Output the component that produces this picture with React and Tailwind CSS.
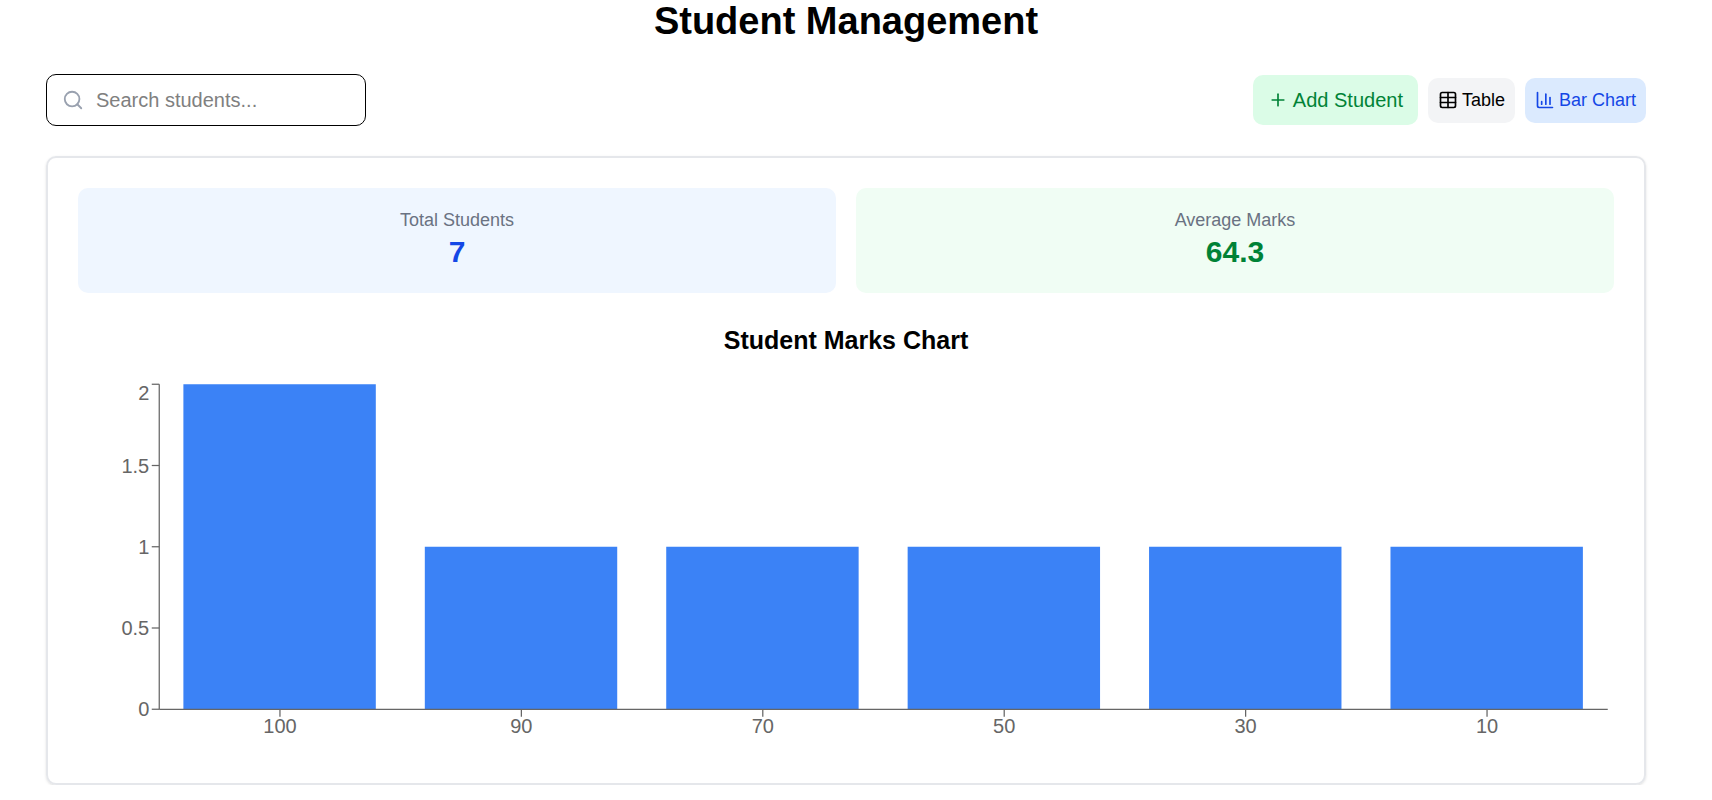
import { useLayoutEffect, useRef, useState } from "react";
import { ChartColumn, Plus, Search, Table } from "lucide-react";

const DATA = [
  { marks: 100, count: 2 },
  { marks: 90, count: 1 },
  { marks: 70, count: 1 },
  { marks: 50, count: 1 },
  { marks: 30, count: 1 },
  { marks: 10, count: 1 },
];
const Y_TICKS = [0, 0.5, 1, 1.5, 2];

function MarksChart() {
  const ref = useRef(null);
  const [width, setWidth] = useState(1536);

  useLayoutEffect(() => {
    const el = ref.current;
    const update = () => setWidth(el.clientWidth);
    update();
    const observer = new ResizeObserver(update);
    observer.observe(el);
    return () => observer.disconnect();
  }, []);

  const left = 81.25;
  const right = width - 6.25;
  const top = 6.25;
  const bottom = 331.25;
  const band = (right - left) / DATA.length;
  const y = (v) => bottom - ((bottom - top) * v) / 2;

  return (
    <div ref={ref} className="h-[375px] w-full">
      <svg width={width} height="375" role="img" aria-label="Student marks" className="block overflow-visible">
        {DATA.map((d, i) => (
          <rect
            key={d.marks}
            x={left + band * (i + 0.1)}
            y={y(d.count)}
            width={band * 0.797}
            height={bottom - y(d.count)}
            fill="#3b82f6"
          />
        ))}
        <g stroke="#666" strokeWidth="1.25">
          <line x1={left} x2={right} y1={bottom} y2={bottom} />
          <line x1={left} x2={left} y1={top} y2={bottom} />
          {DATA.map((d, i) => (
            <line key={d.marks} x1={left + band * (i + 0.5)} x2={left + band * (i + 0.5)} y1={bottom} y2={bottom + 7.5} />
          ))}
          {Y_TICKS.map((t) => (
            <line key={t} x1={left - 7.5} x2={left} y1={y(t)} y2={y(t)} />
          ))}
        </g>
        <g fill="#666" fontSize="20">
          {DATA.map((d, i) => (
            <text key={d.marks} x={left + band * (i + 0.5)} y={bottom + 24} textAnchor="middle">
              {d.marks}
            </text>
          ))}
          {Y_TICKS.map((t) => (
            <text key={t} x={left - 10} y={t === 2 ? top + 16 : y(t) + 7} textAnchor="end">
              {t}
            </text>
          ))}
        </g>
      </svg>
    </div>
  );
}

function Stat({ label, value, box, tone }) {
  return (
    <div className={`flex-1 rounded-[10px] px-5 pt-5 pb-[22px] text-center ${box}`}>
      <p className="text-[18px] leading-[25px] text-gray-500">{label}</p>
      <p className={`text-[30px] leading-[38px] font-bold ${tone}`}>{value}</p>
    </div>
  );
}

export default function App() {
  return (
    <div className="bg-white pr-5 font-['Liberation_Sans',Arial,sans-serif] text-[20px] leading-[30px] text-black">
      <main className="mx-auto max-w-[1600px]">
        <h1 className="text-center text-[38px] leading-[42px] font-bold">Student Management</h1>

        <div className="mt-8 flex flex-wrap items-center justify-between gap-5">
          <label htmlFor="search" className="flex h-[52px] w-80 items-center gap-3 rounded-[10px] border border-black pl-[15px]">
            <Search size={22} className="shrink-0 text-gray-400" aria-hidden="true" />
            <input
              id="search"
              type="text"
              aria-label="Search students"
              placeholder="Search students..."
              className="w-full min-w-0 bg-transparent outline-none placeholder:text-[#808080]"
            />
          </label>
          <div className="flex items-center gap-2.5">
            <button type="button" className="flex items-center gap-[5px] rounded-[10px] bg-green-100 px-[15px] py-2.5 text-green-700">
              <Plus size={20} />
              Add Student
            </button>
            <button type="button" className="flex items-center gap-1 rounded-[10px] bg-gray-100 p-2.5 text-[18px] leading-[25px]">
              <Table size={20} />
              Table
            </button>
            <button type="button" className="flex items-center gap-1 rounded-[10px] bg-blue-100 p-2.5 text-[18px] leading-[25px] text-blue-700">
              <ChartColumn size={20} />
              Bar Chart
            </button>
          </div>
        </div>

        <section className="mt-[30px] rounded-[10px] border-2 border-gray-200 p-[30px] shadow-sm">
          <div className="flex gap-5">
            <Stat label="Total Students" value="7" box="bg-blue-50" tone="text-blue-700" />
            <Stat label="Average Marks" value="64.3" box="bg-green-50" tone="text-green-700" />
          </div>
          <h2 className="mt-[30px] mb-5 text-center text-[25px] leading-[35px] font-bold">Student Marks Chart</h2>
          <MarksChart />
        </section>
      </main>
    </div>
  );
}
